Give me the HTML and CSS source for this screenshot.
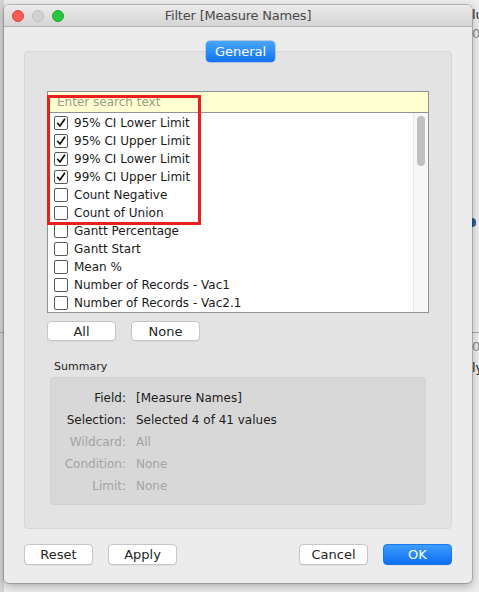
FILE: index.html
```html
<!DOCTYPE html>
<html>
<head>
<meta charset="utf-8">
<link rel="stylesheet" href="styles.css">
</head>
<body>
<div class="backdrop">
  <div class="bd-left"></div>
  <div class="bd-line"></div>
  <span class="bd-txt t1">lu</span>
  <span class="bd-txt t2">0</span>
  <span class="bd-dot"></span>
  <span class="bd-txt t3">0</span>
  <span class="bd-txt t4">ly</span>
</div>
<div class="window">
  <div class="titlebar">
    <div class="lights">
      <span class="light red"></span>
      <span class="light gray"></span>
      <span class="light green"></span>
    </div>
    <div class="title">Filter [Measure Names]</div>
  </div>
  <div class="content">
    <div class="tab-row"><span class="tab">General</span></div>
    <div class="group">
      <div class="list">
        <div class="search">Enter search text</div>
        <div class="rows-wrap">
          <ul class="rows">
            <li><span class="cb on"><svg viewBox="0 0 12 12"><path d="M2.6 6.3 L4.9 9 L9.6 2.2" /></svg></span>95% CI Lower Limit</li>
            <li><span class="cb on"><svg viewBox="0 0 12 12"><path d="M2.6 6.3 L4.9 9 L9.6 2.2" /></svg></span>95% CI Upper Limit</li>
            <li><span class="cb on"><svg viewBox="0 0 12 12"><path d="M2.6 6.3 L4.9 9 L9.6 2.2" /></svg></span>99% CI Lower Limit</li>
            <li><span class="cb on"><svg viewBox="0 0 12 12"><path d="M2.6 6.3 L4.9 9 L9.6 2.2" /></svg></span>99% CI Upper Limit</li>
            <li><span class="cb"></span>Count Negative</li>
            <li><span class="cb"></span>Count of Union</li>
            <li><span class="cb"></span>Gantt Percentage</li>
            <li><span class="cb"></span>Gantt Start</li>
            <li><span class="cb"></span>Mean %</li>
            <li><span class="cb"></span>Number of Records - Vac1</li>
            <li><span class="cb"></span>Number of Records - Vac2.1</li>
          </ul>
          <div class="scrollbar"><div class="thumb"></div></div>
        </div>
        <div class="highlight"></div>
      </div>
      <div class="list-buttons">
        <button class="btn">All</button>
        <button class="btn">None</button>
      </div>
      <div class="summary-label">Summary</div>
      <div class="summary">
        <span class="k">Field:</span><span class="v">[Measure Names]</span>
        <span class="k">Selection:</span><span class="v">Selected 4 of 41 values</span>
        <span class="k dim">Wildcard:</span><span class="v dim">All</span>
        <span class="k dim">Condition:</span><span class="v dim">None</span>
        <span class="k dim">Limit:</span><span class="v dim">None</span>
      </div>
    </div>
    <div class="footer">
      <button class="btn">Reset</button>
      <button class="btn">Apply</button>
      <span class="spacer"></span>
      <button class="btn">Cancel</button>
      <button class="btn primary">OK</button>
    </div>
  </div>
</div>
</body>
</html>
```
FILE: styles.css
```css
* { box-sizing: border-box; }
html, body { margin: 0; padding: 0; }
body {
  width: 479px;
  height: 592px;
  overflow: hidden;
  background: #ececec;
  font-family: "DejaVu Sans", "Liberation Sans", sans-serif;
  position: relative;
}
.backdrop { position: absolute; inset: 0; z-index: 0; }
.bd-left { position: absolute; left: 0; top: 0; width: 4px; height: 592px; background: #d3d3d3; }
.bd-line { position: absolute; left: 0; right: 0; top: 332px; height: 1px; background: #a8a8a8; }
.bd-txt { position: absolute; font-size: 13px; color: #222; }
.t1 { left: 472px; top: 7px; }
.t2 { left: 472px; top: 26px; color: #888; }
.t3 { left: 472px; top: 339px; color: #888; }
.t4 { left: 472px; top: 360px; }
.bd-dot { position: absolute; left: 472px; top: 218px; width: 4px; height: 9px; border-radius: 0 4px 4px 0; background: #2f5e96; }

.window {
  position: relative;
  z-index: 1;
  margin: 5px 0 0 4px;
  width: 468px;
  height: 578px;
  background: #ececec;
  border-radius: 5px;
  box-shadow: 0 0 0 1px rgba(0,0,0,0.18), 0 3px 10px rgba(0,0,0,0.28);
  overflow: hidden;
}
.titlebar {
  height: 22px;
  background: linear-gradient(#ebebeb, #d5d5d5);
  border-bottom: 1px solid #b3b3b3;
  position: relative;
  display: flex;
  align-items: center;
  justify-content: center;
}
.lights { position: absolute; left: 8px; top: 5px; display: flex; gap: 8px; }
.light { width: 12px; height: 12px; border-radius: 50%; display: block; }
.red { background: #fc5b57; border: 1px solid #e0443e; }
.gray { background: #d0d0d0; border: 1px solid #bcbcbc; }
.green { background: #27c840; border: 1px solid #1aab29; }
.title { font-size: 13px; color: #4a4a4a; letter-spacing: -0.2px; }

.content { padding: 14px 20px 0 20px; }
.tab-row { display: flex; justify-content: center; position: relative; z-index: 2; height: 21px; }
.tab {
  display: inline-flex; align-items: center; justify-content: center;
  width: 69px; height: 21px;
  margin-left: 5px;
  border-radius: 4px;
  background: linear-gradient(#4aa6fd, #0f73f6);
  color: #fff; font-size: 13px;
  box-shadow: 0 0 0 0.5px rgba(0,60,160,0.4);
}
.group {
  margin-top: -11px;
  height: 478px;
  background: #e3e3e3;
  border: 1px solid #d7d7d7;
  border-radius: 4px;
  padding: 39px 0 0 22px;
}
.list {
  position: relative;
  width: 382px;
  height: 222px;
  border: 1px solid #8d9199;
  background: #fff;
  display: flex; flex-direction: column;
}
.search {
  height: 21px;
  background: #ffffd2;
  border-bottom: 1px solid #8d9199;
  color: #9b9b84;
  font-size: 12px;
  padding: 3px 0 0 9px;
}
.rows-wrap { flex: 1; display: flex; }
.rows { list-style: none; margin: 0; padding: 1px 0 0 0; flex: 1; }
.rows li {
  height: 18px;
  display: flex; align-items: center;
  font-size: 12px; color: #1a1a1a;
  padding-left: 6px;
}
.cb {
  width: 14px; height: 14px;
  border: 1px solid #5a5a5a;
  border-radius: 2px;
  background: #fff;
  margin-right: 6px;
  display: inline-flex; align-items: center; justify-content: center;
}
.cb svg { width: 12px; height: 12px; }
.cb path { fill: none; stroke: #111; stroke-width: 1.7; stroke-linecap: round; stroke-linejoin: round; }
.scrollbar {
  width: 15px;
  background: #f7f7f7;
  border-left: 1px solid #e9e9e9;
  padding: 3px 0 0 3px;
}
.thumb { width: 8px; height: 50px; border-radius: 4px; background: #c1c1c1; }
.highlight {
  position: absolute;
  left: -1px; top: 3px;
  width: 154px; height: 130px;
  border: 3px solid #e8211f;
  pointer-events: none;
}
.list-buttons { display: flex; gap: 15px; margin-top: 8px; }
.btn {
  width: 69px; height: 20px;
  border: 1px solid #c6c6c6;
  border-radius: 4px;
  background: #fff;
  font-family: inherit;
  font-size: 13px; color: #242424;
  padding: 0;
  box-shadow: 0 0.5px 0 rgba(0,0,0,0.08);
}
.summary-label { font-size: 11px; color: #222; margin: 19px 0 0 7px; }
.summary {
  margin: 4px 0 0 3px;
  width: 376px; height: 128px;
  background: #d8d8d8;
  border: 1px solid #d1d1d1;
  border-radius: 4px;
  display: grid;
  grid-template-columns: 75px auto;
  grid-auto-rows: 22px;
  column-gap: 10px;
  align-content: start;
  padding-top: 9px;
  font-size: 12px; color: #1d1d1d;
}
.summary span { display: flex; align-items: center; }
.summary .k { justify-content: flex-end; }
.summary .dim { color: #a3a3a3; }
.footer { display: flex; align-items: center; gap: 15px; margin-top: 15px; padding-right: 0; }
.footer .btn { height: 21px; }
.footer .spacer { flex: 1; }
.btn.primary {
  background: linear-gradient(#3e9dfc, #0c6ff5);
  border-color: #1b76e8;
  color: #fff;
}
```
